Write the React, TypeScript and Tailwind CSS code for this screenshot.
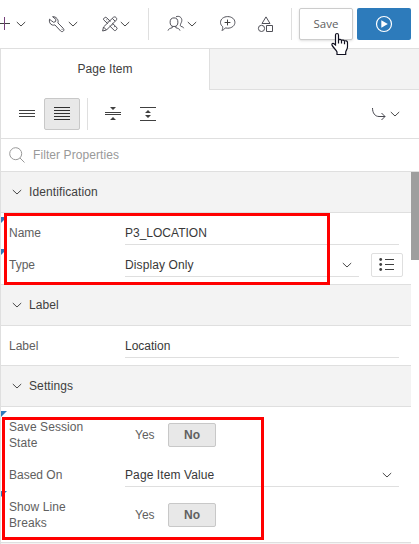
import type { ReactNode } from "react";

function Chevron({ className = "" }: { className?: string }) {
  return (
    <svg className={`h-[6px] w-[10px] shrink-0 ${className}`} viewBox="0 0 10 6" fill="none" stroke="#484848" strokeWidth="1">
      <path d="M.8 1 5 5 9.2 1" />
    </svg>
  );
}

function Icon({ className = "", children }: { className?: string; children: ReactNode }) {
  return (
    <svg className={`h-[18px] w-[18px] shrink-0 ${className}`} viewBox="0 0 18 18" fill="none" stroke="#505058" strokeWidth="1">
      {children}
    </svg>
  );
}

function Toolbar() {
  return (
    <div className="flex h-[49px] items-start border-b border-[#dfdfdf] bg-white pt-2">
      <div className="flex h-8 items-center">
        <svg className="h-[18px] w-[10px]" viewBox="0 0 10 18" fill="none">
          <path d="M0 8.5h10" stroke="#404040" />
          <path d="M4.5 2v13" stroke="#75407a" />
        </svg>
        <Chevron className="ml-1.5" />
        <Icon className="ml-[22px]">
          <path d="M4.6 1.7 8 4.5 7.5 6.6 5.6 7.3 3.2 5.6 1.5 4.2C.9 6.9 2 9.3 4.3 10c1 .3 1.8.2 2.6-.1l5.8 6.2c1.8 1.6 4.2-.7 2.7-2.6L9.9 7.9C11 5 8.3 1.4 4.6 1.7Z" />
          <path d="M13.6 14.3h.9" />
        </Icon>
        <Chevron className="ml-0.5" />
        <Icon className="ml-[23px]">
          <path d="m6.9 8.8-4.3-4c-.8-.8 1.6-3.2 2.6-2.4l4.3 4M11.3 8.2l4.7 4.6c.8 1-1.7 3.5-2.6 2.7l-4.7-4.6M5.4 4.9l.9-.9M7 6.6l.9-.9M11 10.4l.9-.9M12.9 12.2l.9-.9" />
          <path d="m1.6 16 .9-4L12.4 2.3c1.8-1.4 4.3 1 2.9 2.8L5.5 15 1.6 16Zm.9-4 3 3M11.3 3.4l2.9 2.8" />
        </Icon>
        <Chevron className="ml-px" />
        <div className="ml-[18px] h-8 w-px bg-[#dfdfdf]" />
        <Icon className="ml-[18px]">
          <ellipse cx="7" cy="7.2" rx="3.9" ry="4.3" />
          <path d="M1 15.6c.5-2 2.2-2.2 4.3-2.9v-1.6M8.8 11v1.7c2 .7 3.7.9 4.2 2.9M9 1.8c3.1-1.4 6 .6 5.8 3.7-.1 1.9-.8 2.3-1.1 3.3-.3 1.3-.9 2 .4 2.6 1.3.4 2.3.7 2.6 1.8" />
        </Icon>
        <Chevron className="ml-0.5" />
        <Icon className="ml-[22px]">
          <path d="M8.7 1.6c4.1 0 7.2 2.5 7.2 5.8s-3.1 5.8-7.2 5.8c-.8 0-1.7-.1-2.4-.3-1 1.4-2.1 2.2-3.4 2.5.8-1.2.9-2.2.8-3.7-1.4-1.1-2.2-2.6-2.2-4.3 0-3.3 3.1-5.8 7.2-5.8Z" />
          <path d="M8.5 4.6v5.8M5.6 7.5h5.8" stroke="#404040" />
        </Icon>
        <Icon className="ml-5">
          <path d="m9 1.9 4 6.6H5L9 1.9ZM9.5 10.5h6v6h-6z" />
          <circle cx="4.5" cy="13.4" r="3.1" />
        </Icon>
        <div className="ml-4 h-8 w-px bg-[#dfdfdf]" />
        <button className="ml-[7px] h-8 w-[54px] rounded-xs border border-[#cccccc] bg-white font-['Open_Sans',sans-serif] text-[11.5px] text-[#606060] shadow-sm">
          Save
        </button>
        <button className="ml-1 flex h-8 w-[54px] items-center justify-center rounded-xs bg-[#2d7bbb]">
          <svg className="h-[18px] w-[18px]" viewBox="0 0 18 18">
            <circle cx="9" cy="9" r="7.5" fill="none" stroke="#fff" strokeWidth="1.2" />
            <path d="M6.3 5.2v7.6L12.8 9Z" fill="#fff" />
          </svg>
        </button>
      </div>
    </div>
  );
}

function Pointer() {
  return (
    <svg className="absolute left-[330px] top-[32px] h-[24px] w-[19px]" viewBox="0 0 19 24" fill="#fff" stroke="#101020" strokeWidth="1.2">
      <path d="M5.5 13V3.2c0-2.3 3-2.3 3 0v5c.4-1.2 2.7-1 3 .4.6-1 2.7-.7 3 .6.8-.9 3-.4 3 1.3V15c0 2-1.5 3.5-1.8 5v2.5H7V20c-.6-1.8-3.6-4.2-4.9-6.6-.8-1.7.9-2.7 2-1.6L5.5 13Z" />
      <path d="M8.5 8v3.6M11.5 8.8v2.8M14.5 9.4v2.8" />
    </svg>
  );
}

function ViewBar() {
  return (
    <div className="flex h-[49px] items-center border-b border-[#dfdfdf] bg-white">
      <svg className="ml-[18px] h-4 w-4" viewBox="0 0 16 16" stroke="#404040">
        <path d="M0 4.5h16M0 7.5h16M0 10.5h16" />
      </svg>
      <div className="ml-[9px] flex h-8 w-9 items-center justify-center rounded-xs border border-[#c8c8c8] bg-[#e8e8e8]">
        <svg className="h-4 w-4" viewBox="0 0 16 16" stroke="#303030">
          <path d="M0 1.5h16M0 4.5h16M0 7.5h16M0 10.5h16M0 13.5h16" />
        </svg>
      </div>
      <div className="ml-[7px] h-8 w-px bg-[#dfdfdf]" />
      <svg className="ml-[17px] h-4 w-4" viewBox="0 0 16 16">
        <path d="M0 6.5h16M0 8.5h16" stroke="#404040" />
        <path d="M5 1h6L8 4ZM5 14h6L8 11Z" fill="#404040" />
      </svg>
      <svg className="ml-[19px] h-4 w-4" viewBox="0 0 16 16">
        <path d="M0 1.5h16M0 14.5h16" stroke="#404040" />
        <path d="M5 7h6L8 4ZM5 9h6L8 12Z" fill="#404040" />
      </svg>
      <svg className="ml-auto h-4 w-[15px]" viewBox="0 0 15 16" fill="none" stroke="#484850">
        <path d="M1.5 2c0 5 2.5 8.5 6.5 8.5h6M10.5 7l3.5 3.5-3.5 3.5" />
      </svg>
      <Chevron className="mr-[19px] ml-1" />
    </div>
  );
}

function Section({ title, children }: { title: string; children: ReactNode }) {
  return (
    <section>
      <div className="flex h-[41px] items-center border-b border-[#dfdfdf] bg-[#f3f3f3] pl-[11px] text-[#404040]">
        <Chevron />
        <span className="ml-[7px] tracking-[0.1px]">{title}</span>
      </div>
      <div className="border-b border-[#dfdfdf] pb-[7px]">{children}</div>
    </section>
  );
}

function Marker() {
  return (
    <svg className="absolute left-0 top-1 h-[6px] w-[6px]" viewBox="0 0 6 6">
      <path d="M0 0h6L0 6Z" fill="#2d7bbb" />
    </svg>
  );
}

function Field({ label, value, changed, select, list }: { label: string; value: string; changed?: boolean; select?: boolean; list?: boolean }) {
  return (
    <div className="relative flex h-8 items-end pl-2">
      {changed && <Marker />}
      <div className="h-[23px] w-[116px] leading-[23px] text-[#606060]">{label}</div>
      <div className={`flex h-[24px] items-center border-b border-[#dfdfdf] text-[#383838] ${list ? "w-[234px]" : "w-[274px]"}`}>
        <span className={`grow ${select ? "tracking-[0.1px]" : ""}`}>{value}</span>
        {select && <Chevron className="mr-[7px]" />}
      </div>
      {list && (
        <button className="ml-3 flex h-6 w-8 items-center justify-center rounded-xs border border-[#dfdfdf] bg-white">
          <svg className="h-4 w-4" viewBox="0 0 16 16">
            <path d="M6 2.5h9M6 7.5h9M6 12.5h9" stroke="#404040" />
            <g fill="#404040">
              <circle cx="1.7" cy="2.5" r="1.4" />
              <circle cx="1.7" cy="7.5" r="1.4" />
              <circle cx="1.7" cy="12.5" r="1.4" />
            </g>
          </svg>
        </button>
      )}
    </div>
  );
}

function Toggle({ label }: { label: string }) {
  return (
    <div className="relative flex h-12 pl-2">
      <Marker />
      <div className="w-[90px] pt-3 leading-4 tracking-[0.08px] text-[#606060]">{label}</div>
      <div className="mt-4 ml-[26px] flex h-6">
        <div className="w-[43px] pl-[10px] leading-6 text-[#606060]">Yes</div>
        <div className="w-12 rounded-xs border border-[#c8c8c8] bg-[#e8e8e8] text-center leading-[22px] font-bold text-[#606060]">No</div>
      </div>
    </div>
  );
}

export default function App() {
  return (
    <div className="relative h-[544px] w-[419px] overflow-hidden bg-white font-['Liberation_Sans',Arial,sans-serif] text-xs">
      <Toolbar />
      <main className="h-[495px] border-l border-[#dfdfdf]">
        <div className="flex h-[41px]">
          <div className="w-[208px] text-center leading-10 tracking-[0.05px] text-[#404040]">Page Item</div>
          <div className="grow border-b border-l border-[#dfdfdf] bg-[#f3f3f3]" />
        </div>
        <ViewBar />
        <div className="flex h-[33px] items-center border-b border-[#dfdfdf] pl-2">
          <svg className="h-4 w-4" viewBox="0 0 16 16" fill="none" stroke="#999">
            <circle cx="6.7" cy="6.7" r="6" />
            <path d="m11 11 4.5 4.5" />
          </svg>
          <span className="ml-2 tracking-[0.08px] text-[#999]">Filter Properties</span>
        </div>
        <div className="flex">
          <div className="w-[410px]">
            <Section title="Identification">
              <Field label="Name" value="P3_LOCATION" changed />
              <Field label="Type" value="Display Only" changed select list />
            </Section>
            <Section title="Label">
              <Field label="Label" value="Location" />
            </Section>
            <Section title="Settings">
              <Toggle label="Save Session State" />
              <Field label="Based On" value="Page Item Value" select />
              <Toggle label="Show Line Breaks" />
            </Section>
            <div className="h-2 bg-[#f3f3f3]" />
          </div>
          <div className="h-[88px] w-2 bg-[#9e9e9e]" />
        </div>
      </main>
      <div className="absolute left-[4px] top-[213px] h-[72px] w-[326px] border-[3px] border-[#ff0000]" />
      <div className="absolute left-[2px] top-[417px] h-[123px] w-[262px] border-[3px] border-[#ff0000]" />
      <Pointer />
    </div>
  );
}
